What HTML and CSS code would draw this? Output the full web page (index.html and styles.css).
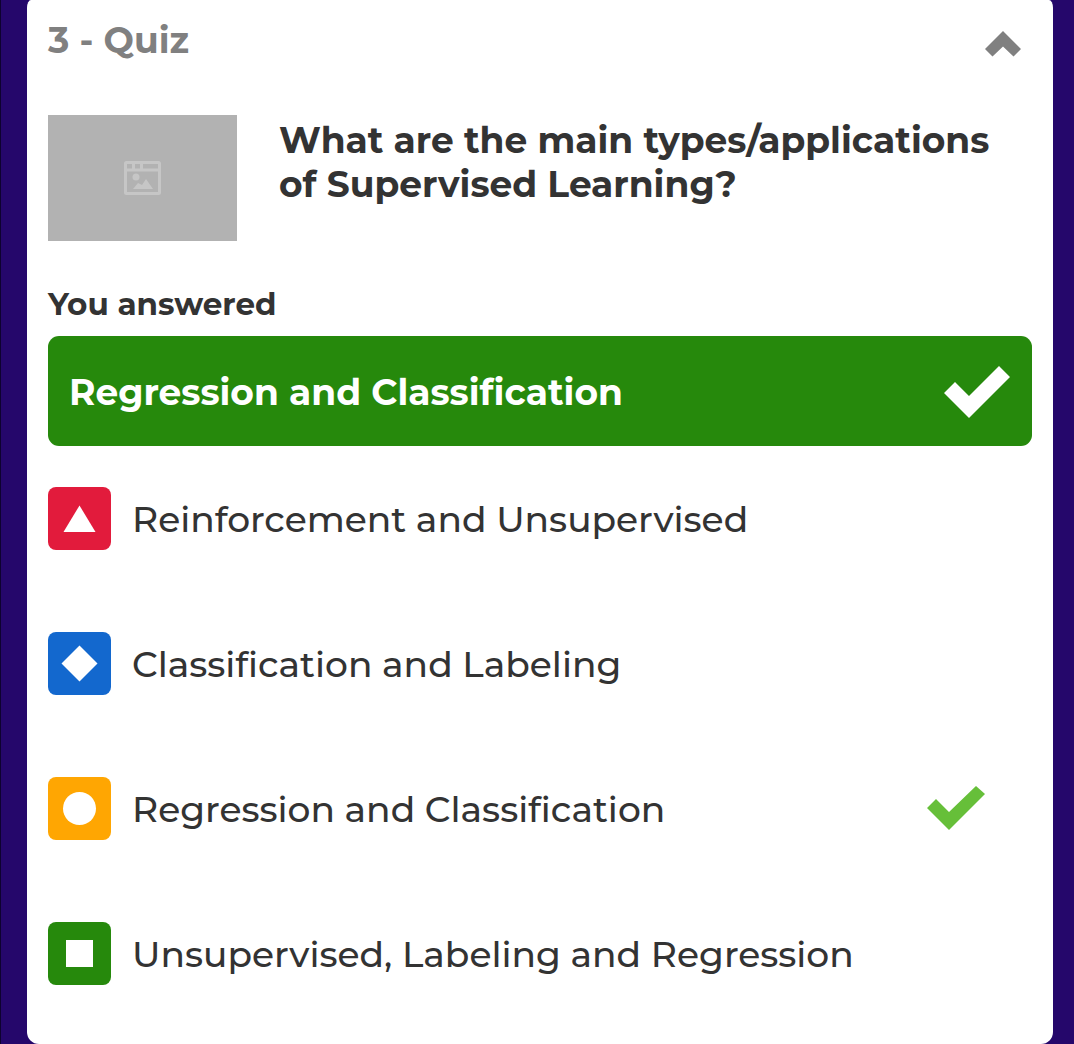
FILE: index.html
```html
<!DOCTYPE html>
<html lang="en">
<head>
<meta charset="utf-8">
<meta name="viewport" content="width=device-width, initial-scale=1">
<title>Quiz question</title>
<link rel="stylesheet" href="styles.css">
</head>
<body>
<main class="card">
  <header class="card-header">
    <h1 class="card-title">3 - Quiz</h1>
    <button class="toggle" type="button" aria-label="Collapse question" aria-expanded="true">
      <svg width="36" height="26" viewBox="0 0 36 26" aria-hidden="true"><path d="M18 0 36 18 28.500 25.500 18 15.500 7.500 25.500 0 18Z" fill="#808080"/></svg>
    </button>
  </header>

  <section class="question">
    <div class="thumb">
      <svg width="38" height="34" viewBox="0 0 38 34" aria-hidden="true">
        <rect x="1.500" y="1.500" width="34" height="31" rx="1" fill="none" stroke="#c6c6c6" stroke-width="3"/>
        <path d="M2 9H36M9.500 2V8M17.500 2V8" stroke="#c6c6c6" stroke-width="3"/>
        <circle cx="12" cy="16" r="3.500" fill="#c6c6c6"/>
        <path d="M9 28 14 22 18 24 22 18 29 28Z" fill="#c6c6c6"/>
      </svg>
    </div>
    <h2 class="question-text">What are the main types/applications<br>of Supervised Learning?</h2>
  </section>

  <h3 class="answered-label">You answered</h3>
  <div class="answered">
    <span>Regression and Classification</span>
    <svg width="66" height="52" viewBox="0 0 66 52" aria-label="Correct" role="img"><path d="M0 27 11 16 25 30 55 0 66 11 25 52Z" fill="#fff"/></svg>
  </div>

  <ul class="choices">
    <li class="choice">
      <span class="badge red"><svg width="37" height="37" viewBox="0 0 37 37" aria-hidden="true"><path d="M18.500 5.500 34.500 32H2.500Z" fill="#fff"/></svg></span>
      <span class="choice-text">Reinforcement and Unsupervised</span>
    </li>
    <li class="choice">
      <span class="badge blue"><svg width="37" height="37" viewBox="0 0 37 37" aria-hidden="true"><path d="M18.500 .5 36.500 18.500 18.500 36.500 .5 18.500Z" fill="#fff"/></svg></span>
      <span class="choice-text">Classification and Labeling</span>
    </li>
    <li class="choice">
      <span class="badge yellow"><svg width="37" height="37" viewBox="0 0 37 37" aria-hidden="true"><circle cx="18.500" cy="18.500" r="16.500" fill="#fff"/></svg></span>
      <span class="choice-text">Regression and Classification</span>
      <svg class="mark" width="58" height="45" viewBox="0 0 58 45" aria-label="Correct answer" role="img"><path d="M0 22 9 13 22 26 49 0 58 8 22 44Z" fill="#66bf39"/></svg>
    </li>
    <li class="choice">
      <span class="badge green"><svg width="37" height="37" viewBox="0 0 37 37" aria-hidden="true"><path d="M5 5H32V32H5Z" fill="#fff"/></svg></span>
      <span class="choice-text">Unsupervised, Labeling and Regression</span>
    </li>
  </ul>
</main>
</body>
</html>
```
FILE: styles.css
```css
* {
  box-sizing: border-box;
}

body {
  margin: 0;
  padding: 0 21px 0 26px;
  border-left: 1px solid #0e0230;
  background: #25076b;
  color: #333;
  font-family: Montserrat, Inter, sans-serif;
}

h1, h2, h3, ul {
  margin: 0;
  padding: 0;
}

svg {
  display: block;
  flex: none;
}

.card {
  padding: 16px 21px 59px;
  border-radius: 4px 4px 12px 12px / 8px 8px 12px 12px;
  background: #fff;
}

.card-header {
  display: flex;
  justify-content: space-between;
  align-items: center;
  height: 48px;
  padding-right: 11px;
}

.card-title {
  color: #808080;
  font-size: 36px;
  line-height: 48px;
  font-weight: 700;
}

.toggle {
  padding: 8px 0 0;
  border: 0;
  background: none;
  cursor: pointer;
}

.question {
  display: flex;
  gap: 42px;
  margin-top: 51px;
}

.thumb {
  display: flex;
  flex: none;
  align-items: center;
  justify-content: center;
  width: 189px;
  height: 126px;
  background: #b2b2b2;
}

.question-text {
  padding-top: 3px;
  font-size: 36px;
  line-height: 44px;
  font-weight: 700;
}

.answered-label {
  margin-top: 43px;
  font-size: 31px;
  line-height: 40px;
  font-weight: 700;
}

.answered {
  display: flex;
  justify-content: space-between;
  align-items: center;
  min-height: 110px;
  margin-top: 12px;
  padding: 2px 22px 0 21px;
  border-radius: 11px;
  background: #26890c;
  color: #fff;
  font-size: 36px;
  line-height: 44px;
  font-weight: 700;
}

.choices {
  display: grid;
  gap: 82px;
  margin-top: 41px;
  list-style: none;
}

.choice {
  display: flex;
  align-items: center;
  gap: 21px;
  font-size: 36px;
  line-height: 44px;
  font-weight: 500;
}

.badge {
  display: flex;
  flex: none;
  align-items: center;
  justify-content: center;
  width: 63px;
  height: 63px;
  border-radius: 8px;
}

.red {
  background: #e21b3c;
}

.blue {
  background: #1368ce;
}

.yellow {
  background: #ffa602;
}

.green {
  background: #26890c;
}

.mark {
  margin: 0 47px 0 auto;
}
```
